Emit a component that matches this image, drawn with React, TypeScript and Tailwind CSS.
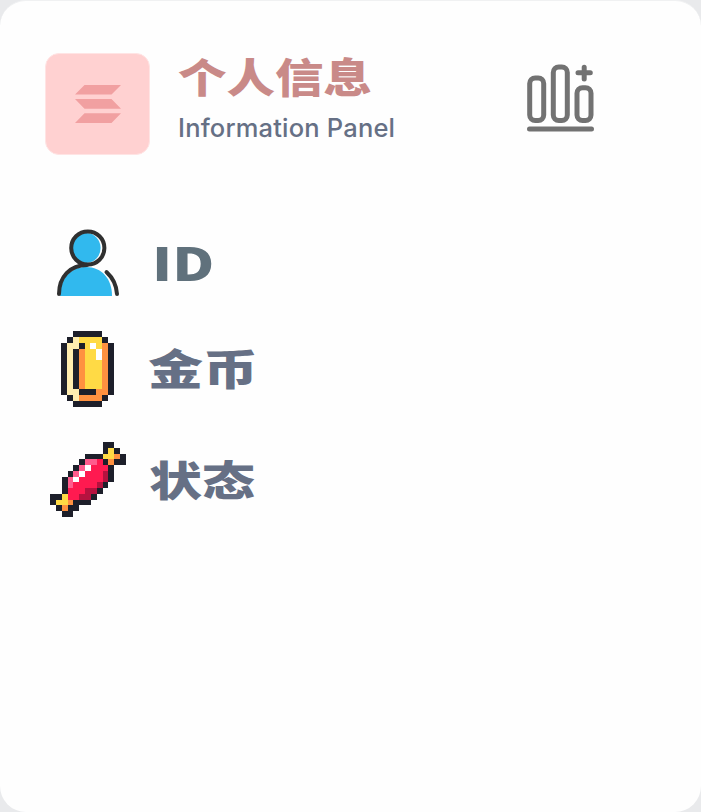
import React from "react";

const palette: Record<string, string> = {
  D: "#1d1f2a",
  C: "#ffedb0",
  Y: "#ffda45",
  O: "#ff9140",
  W: "#ffffff",
  P: "#ff5c8d",
  R: "#ff1a50",
  M: "#b5123f",
};

const coin = [
  "..DDDDD..",
  ".DCYYYYD.",
  "DCCDYWYOD",
  "DCDOYYWOD",
  "DCDOYYWOD",
  "DCDOYYYOD",
  "DCDOYYYOD",
  "DCDOYYYOD",
  "DCDOYYYOD",
  "DCDOYYYOD",
  "DCCDDDOOD",
  ".DCOOOOD.",
  "..DDDDD..",
];

const candy = [
  ".........DD..",
  ".........DYD.",
  "......DDDYYOD",
  ".....DPPRDODD",
  "....DPWRRRD..",
  "...DPWRRRMD..",
  "..DPWRRRRMD..",
  "..DPRRRRMD...",
  "..DRRRMMD....",
  "DDYRRMMD.....",
  "DYYODDD......",
  ".DODD........",
  "..DD.........",
];

function PixelArt({ rows, className }: { rows: string[]; className: string }) {
  return (
    <svg
      className={className}
      viewBox={`0 0 ${rows[0].length} ${rows.length}`}
      preserveAspectRatio="none"
      shapeRendering="crispEdges"
    >
      {rows.flatMap((row, y) =>
        row.split("").map((c, x) =>
          c === "." ? null : <rect key={`${x}-${y}`} x={x} y={y} width={1} height={1} fill={palette[c]} />
        )
      )}
    </svg>
  );
}

const display = "font-['Noto_Sans_CJK_SC',sans-serif] font-black whitespace-nowrap origin-left";

export default function App() {
  return (
    <div className="h-[812px] w-[701px] bg-[#e9eaec]">
      <main className="flex h-full w-full flex-col overflow-hidden rounded-[26px] border-t border-[#f0f1f2] bg-[#fefefe]">
        <header className="flex h-[154px] pt-[52px] pl-[45px]">
          <div className="flex h-[102px] w-[105px] items-center justify-center rounded-[14px] border border-[#ffe4e4] bg-[#ffd1d1]">
            <svg className="h-[38px] w-[46px]" viewBox="0 0 46 38" fill="#f1a0a1">
              <path d="M9.500 0H46L36.500 9.500H0ZM0 14H36.500L46 23.800H9.500ZM9.500 28.300H46L36.500 38H0Z" />
            </svg>
          </div>
          <div className="ml-7 w-[349px]">
            <h1 className={`${display} h-[48px] w-[194px] text-[48.500px] leading-[44px] text-[#c98a88] scale-y-[0.84]`}>个人信息</h1>
            <p className="mt-3 font-['Inter',sans-serif] text-[25.500px] leading-[30px] font-medium tracking-[0.18px] text-[#667085]">Information Panel</p>
          </div>
          <svg className="mt-[11px] h-[68px] w-[68px]" viewBox="0 0 68 68" fill="none" stroke="#727272" strokeWidth="5" strokeLinecap="round">
            <rect x="2.700" y="14" width="14" height="42.500" rx="5.500" />
            <rect x="26.300" y="3" width="14" height="53.500" rx="5.500" />
            <rect x="50" y="23.700" width="14" height="32.800" rx="5.500" />
            <path d="M2.500 65H64.500M51 8.800H63.300M57.200 3.200V15" />
          </svg>
        </header>
        <section className="mt-[74px] pl-[50px]">
          <div className="flex h-[68px]">
            <svg className="ml-[6px] h-[68px] w-[64px]" viewBox="0 0 64 68">
              <path d="M4 67C4 48 16 38 30 38C46 38 56 50 56 67Z" fill="#31b9ee" />
              <ellipse cx="30.300" cy="19" rx="14.300" ry="15" fill="#31b9ee" />
              <circle cx="31.800" cy="19" r="16.600" fill="none" stroke="#303030" strokeWidth="4" />
              <path d="M3 65C3 48 14 36 31 36M50.500 43C57 49 60.500 57 61 65" fill="none" stroke="#303030" strokeWidth="4" strokeLinecap="round" />
            </svg>
            <span className={`${display} mt-[9px] ml-[32px] text-[45px] leading-[48px] text-[#60717c] scale-x-[1.28]`}>ID</span>
          </div>
          <div className="mt-[34px] flex h-[76px]">
            <PixelArt rows={coin} className="ml-[11px] h-[76px] w-[53px]" />
            <span className={`${display} mt-[7px] ml-[34px] text-[55px] leading-[54px] text-[#667085] scale-y-[0.76]`}>金币</span>
          </div>
          <div className="mt-[35px] flex h-[76px]">
            <PixelArt rows={candy} className="h-[75px] w-[76px]" />
            <span className={`${display} mt-[8px] ml-[23px] text-[53px] leading-[54px] text-[#667085] scale-y-[0.78]`}>状态</span>
          </div>
        </section>
      </main>
    </div>
  );
}
